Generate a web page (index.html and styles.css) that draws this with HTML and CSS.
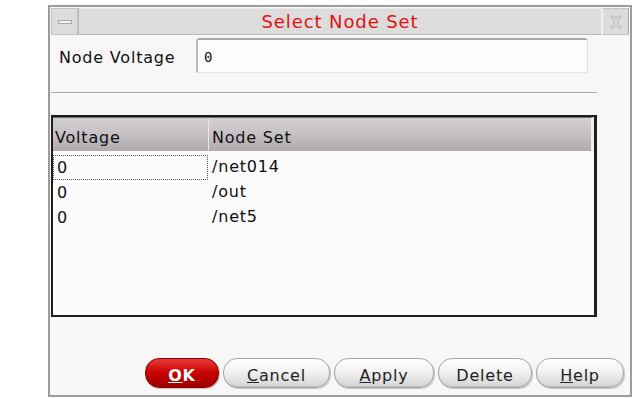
FILE: index.html
```html
<!DOCTYPE html>
<html lang="en">
<head>
    <meta charset="UTF-8">
    <title>Select Node Set</title>
    <link rel="stylesheet" href="styles.css">
</head>
<body>
    <div class="dialog">
        <div class="titlebar">
            <div class="tb-btn tb-min"><span class="min-bar"></span></div>
            <div class="tb-title">Select Node Set</div>
            <div class="tb-btn tb-close">
                <svg width="18" height="18" viewBox="0 0 18 18">
                    <path d="M4 3 L7 3 L9 6 L11 3 L14 3 L10.5 9 L14 15 L11 15 L9 12 L7 15 L4 15 L7.5 9 Z" fill="none" stroke="#b8b8b8" stroke-width="1"/>
                </svg>
            </div>
        </div>

        <div class="form-row">
            <label class="form-label">Node Voltage</label>
            <div class="form-input">0</div>
        </div>

        <div class="separator"></div>

        <div class="table">
            <div class="table-head">
                <div class="col col-volt">Voltage</div>
                <div class="col col-node">Node Set</div>
            </div>
            <div class="table-body">
                <div class="row">
                    <div class="col col-volt focused">0</div>
                    <div class="col col-node">/net014</div>
                </div>
                <div class="row">
                    <div class="col col-volt">0</div>
                    <div class="col col-node">/out</div>
                </div>
                <div class="row">
                    <div class="col col-volt">0</div>
                    <div class="col col-node">/net5</div>
                </div>
            </div>
        </div>

        <div class="buttons">
            <button class="btn btn-ok"><u>O</u>K</button>
            <button class="btn btn-cancel"><u>C</u>ancel</button>
            <button class="btn btn-apply"><u>A</u>pply</button>
            <button class="btn btn-delete">Delete</button>
            <button class="btn btn-help"><u>H</u>elp</button>
        </div>
    </div>
</body>
</html>
```

FILE: styles.css
```css
* {
    margin: 0;
    padding: 0;
    box-sizing: border-box;
}

body {
    background: #ffffff;
    font-family: 'DejaVu Sans', sans-serif;
    font-size: 16px;
    letter-spacing: 0.8px;
    color: #111;
}

.dialog {
    margin: 5px 0 0 48px;
    width: 584px;
    height: 392px;
    border: 2px solid #9c9c9c;
    background: #f8f6f7;
    padding: 1px;
    display: flex;
    flex-direction: column;
}

/* title bar */
.titlebar {
    display: flex;
    height: 27px;
    background: #dcdcdc;
}

.tb-btn {
    width: 28px;
    display: flex;
    align-items: center;
    justify-content: center;
    background: #dcdcdc;
    border: 1px solid #c4c4c4;
    border-right-color: #a8a8a8;
}

.tb-min {
    border-right: 2px solid #bdbdbd;
}

.min-bar {
    display: block;
    width: 14px;
    height: 4px;
    background: #f0f0f0;
    border: 1px solid #a8a8a8;
    margin-top: 1px;
}

.tb-close {
    border-left: 2px solid #f2f2f2;
}

.tb-title {
    flex: 1;
    text-align: center;
    color: #e01010;
    font-size: 18px;
    line-height: 25px;
    letter-spacing: 0.9px;
    border-top: 1px solid #e8e8e8;
    border-bottom: 1px solid #b8b8b8;
}

/* form */
.form-row {
    display: flex;
    align-items: center;
    padding: 3px 0 0 8px;
}

.form-label {
    width: 137px;
    margin-top: 3px;
}

.form-input {
    width: 392px;
    height: 35px;
    background: #fcfcfc;
    border-top: 2px solid #a9a9a9;
    border-left: 2px solid #bdbdbd;
    border-right: 1px solid #e0e0e0;
    border-bottom: 1px solid #e6e6e6;
    border-radius: 3px 3px 0 0;
    font-family: 'DejaVu Sans Mono', monospace;
    font-size: 14px;
    letter-spacing: 0;
    line-height: 34px;
    padding-left: 6px;
}

.separator {
    margin: 19px 32px 0 0;
    height: 2px;
    border-top: 1px solid #a8a8a8;
    border-bottom: 1px solid #fdfdfd;
}

/* table */
.table {
    margin: 21px 32px 0 0;
    height: 202px;
    border: 2px solid #1e1e1e;
    border-right-width: 3px;
    background: #fbfbfb;
    display: flex;
    flex-direction: column;
}

.table-head {
    display: flex;
    height: 34px;
    background: linear-gradient(#d3cfd2, #c4c0c4 50%, #aeaaae);
    border-top: 1px solid #6c6c6c;
    border-right: 3px solid #efefef;
}

.table-head .col {
    line-height: 40px;
}

.col-volt {
    width: 156px;
    padding-left: 2px;
}

.table-head .col-volt {
    border-right: 1px solid #e6e2e6;
}

.col-node {
    flex: 1;
    padding-left: 3px;
}

.table-body {
    padding-top: 4px;
}

.row {
    display: flex;
    height: 25px;
    line-height: 24px;
}

.row .col-volt {
    padding-left: 3px;
    border: 1px solid transparent;
    width: 155px;
    margin-right: 1px;
}

.row .col-node {
    padding-left: 3px;
}

.focused {
    border: 1px dotted #555 !important;
}

/* buttons */
.buttons {
    display: flex;
    justify-content: flex-end;
    gap: 4px;
    margin-top: auto;
    padding: 0 5px 6px 0;
}

.btn {
    height: 30px;
    border-radius: 14px;
    border: 1px solid #a6a6a6;
    background: linear-gradient(#ffffff, #f2f2f2 45%, #d4d4d4);
    box-shadow: inset 0 -1px 0 #c0c0c0, 1px 1px 0 #c8c8c8;
    font-family: 'DejaVu Sans', sans-serif;
    font-size: 16px;
    letter-spacing: 0.8px;
    color: #222;
    padding-top: 4px;
}

.btn-ok {
    width: 74px;
    background: linear-gradient(#e83a3a, #c80000 50%, #a00000);
    border-color: #8a0000;
    color: #fff;
    font-weight: bold;
    box-shadow: 1px 1px 0 #c8c8c8;
}

.btn-cancel {
    width: 107px;
}

.btn-apply {
    width: 100px;
}

.btn-delete {
    width: 94px;
}

.btn-help {
    width: 88px;
}
```
